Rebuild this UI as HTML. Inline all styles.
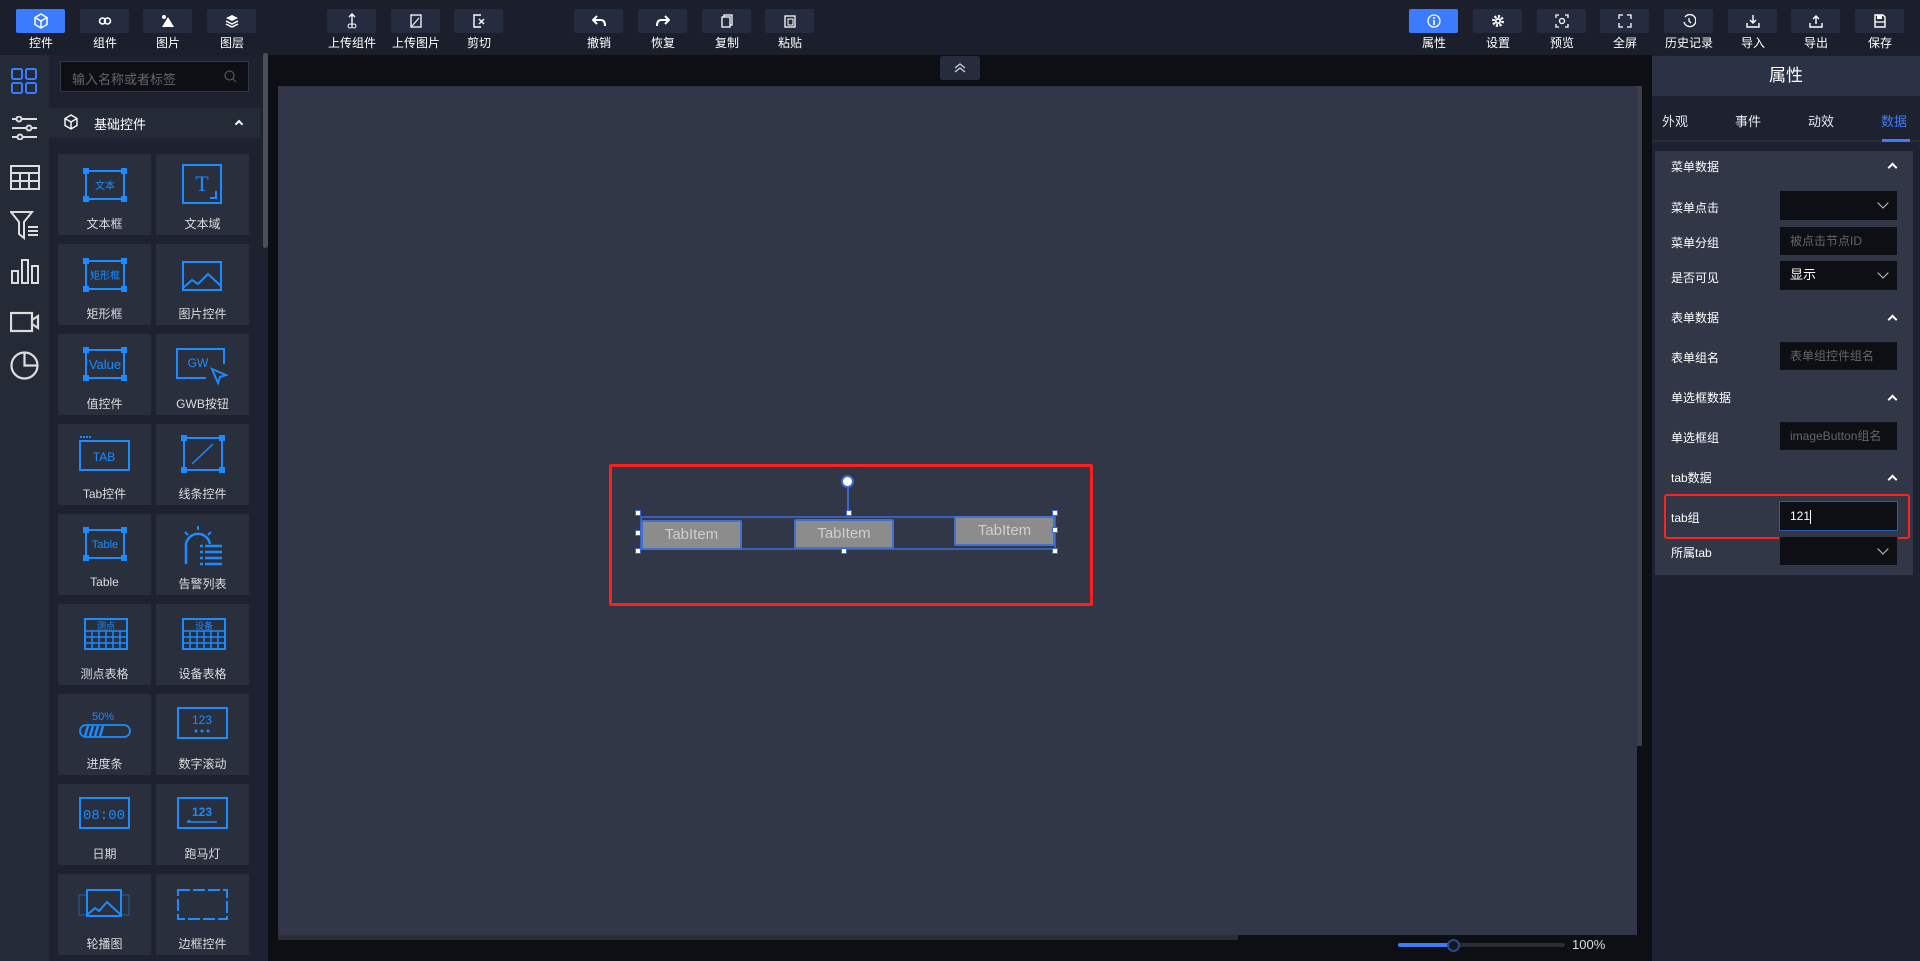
<!DOCTYPE html>
<html><head><meta charset="utf-8"><style>
*{margin:0;padding:0;box-sizing:border-box}
body{width:1920px;height:961px;overflow:hidden;background:#0d0f14;font-family:"Liberation Sans","Noto Sans CJK SC",sans-serif;color:#e6e8ee;position:relative}
.abs{position:absolute}
#top{left:0;top:0;width:1920px;height:55px;background:#1b1f2b}
.tb{position:absolute;top:9px;width:49px;height:24px;background:#252c3f;border-radius:2px;display:flex;align-items:center;justify-content:center}
.tb.on{background:#3b7cff}
.tl{position:absolute;top:34px;width:64px;margin-left:-7px;text-align:center;font-size:12px;color:#fff}
#lbar{left:0;top:55px;width:49px;height:906px;background:#252a37}
#lpanel{left:49px;top:55px;width:219px;height:906px;background:#1e2230}
.card{position:absolute;width:93px;height:81px;background:#2a2f3e}
.card .t{position:absolute;left:0;right:0;top:61px;text-align:center;font-size:12px;color:#ddd}
.card svg{position:absolute;left:24px;top:10px}
#rp{left:1652px;top:55px;width:268px;height:906px;background:#1e2230}
.lab{position:absolute;left:1671px;font-size:12px;color:#fff}
.inp{position:absolute;left:1779px;width:119px;height:30px;background:#0d0f14;border:1px solid #333845;font-size:12px;color:#666;padding-left:10px;line-height:28px}
.chev{position:absolute;right:10px;top:8px;width:8px;height:8px;border-right:1.5px solid #ccc;border-bottom:1.5px solid #ccc;transform:rotate(45deg)}
.up{position:absolute;left:1889px;width:7px;height:7px;border-left:2px solid #fff;border-top:2px solid #fff;transform:rotate(45deg)}
.ti{position:absolute;height:30px;background:#8c8c8c;border:2px solid #4070d0;border-radius:2px;color:#cfcfcf;font-size:15px;text-align:center;line-height:26px}
.h{position:absolute;width:6px;height:6px;background:#fff;border:1.5px solid #3a6ad0}
</style></head><body>
<div id="top" class="abs">
<div class="tb on" style="left:16px"><svg width="14" height="16" viewBox="0 0 14 16"><path d="M7 1L13 4.5V11.5L7 15L1 11.5V4.5Z M1 4.5L7 8L13 4.5M7 8V15" fill="none" stroke="#fff" stroke-width="1.5"/></svg></div><div class="tl" style="left:16px">控件</div>
<div class="tb" style="left:80px"><svg width="14" height="10"><circle cx="4.5" cy="5" r="3" fill="none" stroke="#fff" stroke-width="1.6"/><circle cx="9.5" cy="5" r="3" fill="none" stroke="#fff" stroke-width="1.6"/></svg></div><div class="tl" style="left:80px">组件</div>
<div class="tb" style="left:143px"><svg width="14" height="14"><circle cx="3" cy="3" r="2" fill="#fff"/><path d="M1 13L7 3L13 13Z" fill="#fff"/></svg></div><div class="tl" style="left:143px">图片</div>
<div class="tb" style="left:207px"><svg width="14" height="14"><path d="M7 1L13 4L7 7L1 4Z" fill="#fff"/><path d="M1 7L7 10L13 7M1 10L7 13L13 10" fill="none" stroke="#fff" stroke-width="1.5"/></svg></div><div class="tl" style="left:207px">图层</div>
<div class="tb" style="left:327px"><svg width="12" height="16"><path d="M6 1V11M3 4L6 1L9 4" fill="none" stroke="#fff" stroke-width="1.4"/><circle cx="4" cy="13" r="2" fill="none" stroke="#fff"/><circle cx="8" cy="13" r="2" fill="none" stroke="#fff"/></svg></div><div class="tl" style="left:327px">上传组件</div>
<div class="tb" style="left:391px"><svg width="12" height="14"><rect x="1" y="1" width="10" height="12" fill="none" stroke="#fff" stroke-width="1.3"/><path d="M2 12L9 4" stroke="#fff"/></svg></div><div class="tl" style="left:391px">上传图片</div>
<div class="tb" style="left:454px"><svg width="12" height="14"><path d="M8 1H1V13H8" fill="none" stroke="#fff" stroke-width="1.4"/><path d="M6 5L11 10M11 5L6 10" stroke="#fff" stroke-width="1.4"/></svg></div><div class="tl" style="left:454px">剪切</div>
<div class="tb" style="left:574px"><svg width="14" height="12"><path d="M5 1L1 5L5 9M1 5H9Q13 5 13 11" fill="none" stroke="#fff" stroke-width="2"/></svg></div><div class="tl" style="left:574px">撤销</div>
<div class="tb" style="left:638px"><svg width="14" height="12"><path d="M9 1L13 5L9 9M13 5H5Q1 5 1 11" fill="none" stroke="#fff" stroke-width="2"/></svg></div><div class="tl" style="left:638px">恢复</div>
<div class="tb" style="left:702px"><svg width="12" height="14"><rect x="3" y="1" width="8" height="10" fill="none" stroke="#fff" stroke-width="1.3"/><rect x="1" y="3" width="8" height="10" fill="#252c3f" stroke="#fff" stroke-width="1.3"/></svg></div><div class="tl" style="left:702px">复制</div>
<div class="tb" style="left:765px"><svg width="12" height="14"><rect x="1" y="2" width="10" height="11" fill="none" stroke="#fff" stroke-width="1.3"/><rect x="4" y="5" width="5" height="6" fill="none" stroke="#fff"/></svg></div><div class="tl" style="left:765px">粘贴</div>
<div class="tb on" style="left:1409px"><svg width="14" height="14"><circle cx="7" cy="7" r="6" fill="none" stroke="#fff" stroke-width="1.3"/><path d="M7 6V11" stroke="#fff" stroke-width="1.6"/><circle cx="7" cy="4" r="1" fill="#fff"/></svg></div><div class="tl" style="left:1409px">属性</div>
<div class="tb" style="left:1473px"><svg width="14" height="14"><circle cx="7" cy="7" r="4.5" fill="none" stroke="#fff" stroke-width="3" stroke-dasharray="2 1.5"/><circle cx="7" cy="7" r="3" fill="#fff"/><circle cx="7" cy="7" r="1.3" fill="#252c3f"/></svg></div><div class="tl" style="left:1473px">设置</div>
<div class="tb" style="left:1537px"><svg width="14" height="14"><path d="M1 4V1H4M10 1H13V4M13 10V13H10M4 13H1V10" fill="none" stroke="#fff" stroke-width="1.3"/><circle cx="7" cy="7" r="2.5" fill="none" stroke="#fff" stroke-width="1.3"/></svg></div><div class="tl" style="left:1537px">预览</div>
<div class="tb" style="left:1600px"><svg width="14" height="14"><path d="M1 5V1H5M9 1H13V5M13 9V13H9M5 13H1V9" fill="none" stroke="#fff" stroke-width="1.3"/></svg></div><div class="tl" style="left:1600px">全屏</div>
<div class="tb" style="left:1664px"><svg width="14" height="14"><path d="M3 3A6 6 0 1 1 2 8" fill="none" stroke="#fff" stroke-width="1.3"/><path d="M7 4V7L9 9" fill="none" stroke="#fff" stroke-width="1.3"/></svg></div><div class="tl" style="left:1664px">历史记录</div>
<div class="tb" style="left:1728px"><svg width="14" height="14"><path d="M7 1V9M4 6L7 9L10 6M1 9V13H13V9" fill="none" stroke="#fff" stroke-width="1.4"/></svg></div><div class="tl" style="left:1728px">导入</div>
<div class="tb" style="left:1791px"><svg width="14" height="14"><path d="M7 10V2M4 5L7 2L10 5M1 9V13H13V9" fill="none" stroke="#fff" stroke-width="1.4"/></svg></div><div class="tl" style="left:1791px">导出</div>
<div class="tb" style="left:1855px"><svg width="12" height="14"><path d="M1 1H9L11 3V13H1Z" fill="none" stroke="#fff" stroke-width="1.4"/><rect x="3" y="1" width="5" height="4" fill="#fff"/><path d="M1 8H11" stroke="#fff" stroke-width="1.3"/></svg></div><div class="tl" style="left:1855px">保存</div>
</div>

<div id="lbar" class="abs">
<svg class="abs" style="left:11px;top:13px" width="27" height="27"><g fill="none" stroke="#3b7cff" stroke-width="2"><rect x="1" y="1" width="10" height="10" rx="1.5"/><rect x="15" y="1" width="10" height="10" rx="1.5"/><rect x="1" y="15" width="10" height="10" rx="1.5"/><rect x="15" y="15" width="10" height="10" rx="1.5"/></g></svg>
<svg class="abs" style="left:11px;top:61px" width="27" height="24"><g stroke="#ddd" stroke-width="2" fill="#252a37"><path d="M1 3H26M1 12H26M1 21H26"/><circle cx="8" cy="3" r="2.5"/><circle cx="18" cy="12" r="2.5"/><circle cx="9" cy="21" r="2.5"/></g></svg>
<svg class="abs" style="left:10px;top:110px" width="30" height="25"><g fill="none" stroke="#ddd" stroke-width="2"><rect x="1" y="1" width="28" height="23"/><path d="M1 8H29M1 16H29M10 8V24M19 8V24"/></g></svg>
<svg class="abs" style="left:10px;top:155px" width="30" height="30"><g fill="none" stroke="#ddd" stroke-width="2"><path d="M1 2H22L14 12V28L9 24V12Z"/><path d="M18 17H28M18 21H28M18 25H28"/></g></svg>
<svg class="abs" style="left:11px;top:203px" width="28" height="26"><g fill="none" stroke="#ddd" stroke-width="2"><rect x="1" y="13" width="6" height="12"/><rect x="11" y="2" width="6" height="23"/><rect x="21" y="8" width="6" height="17"/></g></svg>
<svg class="abs" style="left:10px;top:256px" width="30" height="22"><g fill="none" stroke="#ddd" stroke-width="2.2"><rect x="1" y="2" width="21" height="18"/><path d="M22 9L28 5V17L22 13"/></g></svg>
<svg class="abs" style="left:10px;top:296px" width="29" height="29"><g fill="none" stroke="#ddd" stroke-width="2.2"><circle cx="14.5" cy="14.5" r="13"/><path d="M14.5 1.5V14.5H27.5"/></g></svg>
</div>

<div id="lpanel" class="abs">
<div class="abs" style="left:11px;top:6px;width:189px;height:31px;background:#0d0f14;border:1px solid #333845;font-size:13px;color:#666;padding:7px 11px">输入名称或者标签</div>
<svg class="abs" style="left:175px;top:15px" width="13" height="13"><circle cx="5.5" cy="5.5" r="4.5" fill="none" stroke="#555" stroke-width="1.2"/><path d="M9 9L12 12" stroke="#555" stroke-width="1.2"/></svg>
<div class="abs" style="left:0;top:53px;width:212px;height:30px;background:#252a37"></div>
<svg class="abs" style="left:15px;top:59px" width="14" height="16"><path d="M7 1L13 4.5V11.5L7 15L1 11.5V4.5Z M1 4.5L7 8L13 4.5M7 8V15" fill="none" stroke="#fff" stroke-width="1.4"/></svg>
<div class="abs" style="left:45px;top:59px;font-size:13px;color:#fff">基础控件</div>
<div class="abs" style="left:187px;top:66px;width:6px;height:6px;border-left:2px solid #fff;border-top:2px solid #fff;transform:rotate(45deg)"></div>
<div class="abs" style="left:214px;top:-2px;width:5px;height:195px;background:#4a4f5a;border-radius:3px"></div>
</div>

<div class="card" style="left:58px;top:154px"><svg width="46" height="40"><g stroke="#1a8cff" fill="none" stroke-width="2"><rect x="4" y="7" width="38" height="28"/></g><g fill="#1a8cff"><rect x="1" y="4" width="6" height="6"/><rect x="39" y="4" width="6" height="6"/><rect x="1" y="32" width="6" height="6"/><rect x="39" y="32" width="6" height="6"/></g><text x="23" y="25" font-size="10" fill="#1a8cff" text-anchor="middle" font-family="Noto Sans CJK SC">文本</text></svg><div class="t">文本框</div></div>
<div class="card" style="left:156px;top:154px"><svg width="46" height="42"><rect x="3" y="1" width="38" height="38" stroke="#1a8cff" stroke-width="2" fill="none"/><text x="22" y="27" font-size="22" fill="#1a8cff" text-anchor="middle" font-family="Liberation Serif">T</text><path d="M36 27V34H30" stroke="#1a8cff" stroke-width="2" fill="none"/></svg><div class="t">文本域</div></div>
<div class="card" style="left:58px;top:244px"><svg width="46" height="40"><rect x="4" y="7" width="38" height="28" stroke="#1a8cff" stroke-width="2" fill="none"/><g fill="#1a8cff"><rect x="1" y="4" width="6" height="6"/><rect x="39" y="4" width="6" height="6"/><rect x="1" y="32" width="6" height="6"/><rect x="39" y="32" width="6" height="6"/></g><text x="23" y="25" font-size="10" fill="#1a8cff" text-anchor="middle" font-family="Noto Sans CJK SC">矩形框</text></svg><div class="t">矩形框</div></div>
<div class="card" style="left:156px;top:244px"><svg width="46" height="40"><rect x="3" y="8" width="38" height="28" stroke="#1a8cff" stroke-width="2" fill="none"/><path d="M3 34L12 26L18 30L28 20L41 32" stroke="#1a8cff" stroke-width="2" fill="none"/></svg><div class="t">图片控件</div></div>
<div class="card" style="left:58px;top:334px"><svg width="46" height="40"><rect x="4" y="6" width="38" height="28" stroke="#1a8cff" stroke-width="2" fill="none"/><g fill="#1a8cff"><rect x="1" y="3" width="6" height="6"/><rect x="39" y="3" width="6" height="6"/><rect x="1" y="31" width="6" height="6"/><rect x="39" y="31" width="6" height="6"/></g><text x="23" y="25" font-size="13" fill="#1a8cff" text-anchor="middle">Value</text></svg><div class="t">值控件</div></div>
<div class="card" style="left:156px;top:334px"><svg width="56" height="42" style="left:18px"><path d="M50 20V5H3V34H32" stroke="#1a8cff" stroke-width="2" fill="none"/><text x="24" y="23" font-size="12" fill="#1a8cff" text-anchor="middle">GW</text><path d="M38 25L52 31L46 33L44 39Z" stroke="#1a8cff" stroke-width="2" fill="none"/></svg><div class="t">GWB按钮</div></div>
<div class="card" style="left:58px;top:424px"><svg width="56" height="40" style="left:19px"><rect x="3" y="7" width="49" height="29" stroke="#1a8cff" stroke-width="2" fill="none"/><path d="M3 3H15" stroke="#1a8cff" stroke-width="2" stroke-dasharray="2 1"/><text x="27" y="27" font-size="12" fill="#1a8cff" text-anchor="middle">TAB</text></svg><div class="t">Tab控件</div></div>
<div class="card" style="left:156px;top:424px"><svg width="46" height="42"><rect x="4" y="4" width="38" height="32" stroke="#1a8cff" stroke-width="2" fill="none"/><g fill="#1a8cff"><rect x="1" y="1" width="6" height="6"/><rect x="39" y="1" width="6" height="6"/><rect x="1" y="33" width="6" height="6"/><rect x="39" y="33" width="6" height="6"/></g><path d="M12 30L33 10" stroke="#1a8cff" stroke-width="1.5"/></svg><div class="t">线条控件</div></div>
<div class="card" style="left:58px;top:514px"><svg width="46" height="40"><rect x="4" y="6" width="38" height="28" stroke="#1a8cff" stroke-width="2" fill="none"/><g fill="#1a8cff"><rect x="1" y="3" width="6" height="6"/><rect x="39" y="3" width="6" height="6"/><rect x="1" y="31" width="6" height="6"/><rect x="39" y="31" width="6" height="6"/></g><text x="23" y="24" font-size="11" fill="#1a8cff" text-anchor="middle">Table</text></svg><div class="t">Table</div></div>
<div class="card" style="left:156px;top:514px"><svg width="46" height="42"><path d="M6 40V24A12 12 0 0 1 30 20" stroke="#1a8cff" stroke-width="2.5" fill="none"/><path d="M18 2V6M5 8L8 11M31 8L28 11" stroke="#1a8cff" stroke-width="2"/><path d="M20 22H42M20 28H42M20 34H42M20 40H42" stroke="#1a8cff" stroke-width="2.5" stroke-dasharray="3 2 30"/></svg><div class="t">告警列表</div></div>
<div class="card" style="left:58px;top:604px"><svg width="46" height="40"><rect x="3" y="5" width="42" height="30" stroke="#1a8cff" stroke-width="2" fill="none"/><path d="M3 17H45M3 23H45M3 29H45M10 17V35M17 17V35M24 17V35M31 17V35M38 17V35" stroke="#1a8cff" stroke-width="1.5"/><text x="24" y="15" font-size="9" fill="#1a8cff" text-anchor="middle" font-family="Noto Sans CJK SC">测点</text></svg><div class="t">测点表格</div></div>
<div class="card" style="left:156px;top:604px"><svg width="46" height="40"><rect x="3" y="5" width="42" height="30" stroke="#1a8cff" stroke-width="2" fill="none"/><path d="M3 17H45M3 23H45M3 29H45M10 17V35M17 17V35M24 17V35M31 17V35M38 17V35" stroke="#1a8cff" stroke-width="1.5"/><text x="24" y="15" font-size="9" fill="#1a8cff" text-anchor="middle" font-family="Noto Sans CJK SC">设备</text></svg><div class="t">设备表格</div></div>
<div class="card" style="left:58px;top:694px"><svg width="56" height="40" style="left:19px"><text x="26" y="16" font-size="11" fill="#1a8cff" text-anchor="middle">50%</text><rect x="3" y="21" width="50" height="12" rx="6" stroke="#1a8cff" stroke-width="1.8" fill="none"/><path d="M8 32L11 22M13 32L16 22M18 32L21 22M23 32L26 22" stroke="#1a8cff" stroke-width="2.5"/></svg><div class="t">进度条</div></div>
<div class="card" style="left:156px;top:694px"><svg width="56" height="40" style="left:19px"><rect x="3" y="4" width="49" height="30" stroke="#1a8cff" stroke-width="2" fill="none"/><text x="27" y="20" font-size="12" fill="#1a8cff" text-anchor="middle">123</text><circle cx="21" cy="27" r="1.5" fill="#1a8cff"/><circle cx="27" cy="27" r="1.5" fill="#1a8cff"/><circle cx="33" cy="27" r="1.5" fill="#1a8cff"/></svg><div class="t">数字滚动</div></div>
<div class="card" style="left:58px;top:784px"><svg width="56" height="40" style="left:19px"><rect x="3" y="4" width="49" height="30" stroke="#1a8cff" stroke-width="2" fill="none"/><text x="27" y="25" font-size="14" fill="#1a8cff" text-anchor="middle" font-family="Liberation Mono">08:00</text></svg><div class="t">日期</div></div>
<div class="card" style="left:156px;top:784px"><svg width="56" height="40" style="left:19px"><rect x="3" y="4" width="49" height="30" stroke="#1a8cff" stroke-width="2" fill="none"/><text x="27" y="22" font-size="12" fill="#1a8cff" text-anchor="middle" font-weight="bold">123</text><path d="M12 28H42M12 28L15 26" stroke="#1a8cff" stroke-width="1.5"/></svg><div class="t">跑马灯</div></div>
<div class="card" style="left:58px;top:874px"><svg width="56" height="40" style="left:19px"><rect x="2" y="11" width="50" height="20" stroke="#1a8cff" stroke-width="1.3" fill="none" opacity=".4"/><rect x="10" y="6" width="34" height="26" stroke="#1a8cff" stroke-width="2" fill="#2a2f3e"/><path d="M10 31L18 24L22 27L30 18L44 31" stroke="#1a8cff" stroke-width="2" fill="none"/></svg><div class="t">轮播图</div></div>
<div class="card" style="left:156px;top:874px"><svg width="56" height="40" style="left:19px"><rect x="3" y="6" width="49" height="29" stroke="#1a8cff" stroke-width="2" fill="none" stroke-dasharray="12 3"/></svg><div class="t">边框控件</div></div>

<!-- canvas -->
<div class="abs" style="left:940px;top:56px;width:40px;height:24px;background:#262c3c;border-radius:3px"></div>
<svg class="abs" style="left:953px;top:62px" width="14" height="12"><path d="M2 6L7 2L12 6M2 10L7 6L12 10" fill="none" stroke="#ccc" stroke-width="1.4"/></svg>
<div class="abs" style="left:278px;top:86px;width:1359px;height:849px;background:#323747"></div>
<div class="abs" style="left:1637px;top:86px;width:5px;height:660px;background:#3a3f4b"></div>
<div class="abs" style="left:278px;top:935px;width:960px;height:5px;background:#2a2d35"></div>
<div class="abs" style="left:609px;top:464px;width:484px;height:142px;border:3px solid #ff1f1f;border-radius:2px"></div>
<div class="abs" style="left:640px;top:516px;width:416px;height:34px;border:2px solid #3a5fb8"></div>
<div class="abs" style="left:847px;top:482px;width:2px;height:34px;background:#3a6ad0"></div>
<div class="abs" style="left:841px;top:475px;width:13px;height:13px;border-radius:50%;background:#fff;border:2px solid #3a6ad0"></div>
<div class="ti" style="left:641px;top:520px;width:101px">TabItem</div>
<div class="ti" style="left:794px;top:519px;width:100px">TabItem</div>
<div class="ti" style="left:954px;top:516px;width:101px">TabItem</div>
<div class="h" style="left:635px;top:510px"></div><div class="h" style="left:846px;top:510px"></div><div class="h" style="left:1052px;top:510px"></div>
<div class="h" style="left:635px;top:530px"></div><div class="h" style="left:1052px;top:527px"></div>
<div class="h" style="left:635px;top:548px"></div><div class="h" style="left:841px;top:548px"></div><div class="h" style="left:1052px;top:548px"></div>
<div class="abs" style="left:1398px;top:943px;width:167px;height:4px;background:#2a2d35;border-radius:2px"></div>
<div class="abs" style="left:1398px;top:943px;width:55px;height:4px;background:#3b7cff;border-radius:2px"></div>
<div class="abs" style="left:1447px;top:939px;width:13px;height:13px;border-radius:50%;background:#15171d;border:2px solid #2b4a8a"></div>
<div class="abs" style="left:1572px;top:937px;font-size:13px;color:#ddd">100%</div>

<!-- right panel -->
<div id="rp" class="abs"></div>
<div class="abs" style="left:1652px;top:56px;width:268px;height:40px;background:#2b3245;text-align:center;font-size:17px;color:#fff;line-height:40px">属性</div>
<div class="abs" style="left:1662px;top:111px;font-size:13px">外观</div>
<div class="abs" style="left:1735px;top:111px;font-size:13px">事件</div>
<div class="abs" style="left:1808px;top:111px;font-size:13px">动效</div>
<div class="abs" style="left:1881px;top:111px;font-size:13px;color:#3b7cff">数据</div>
<div class="abs" style="left:1652px;top:140px;width:268px;height:2px;background:#2a2c33"></div>
<div class="abs" style="left:1882px;top:139px;width:28px;height:3px;background:#3b7cff"></div>
<div class="abs" style="left:1655px;top:151px;width:258px;height:424px;background:#323747"></div>
<div class="lab" style="top:158px">菜单数据</div><div class="up" style="top:164px"></div>
<div class="lab" style="top:199px">菜单点击</div><div class="inp" style="top:190px;height:31px"><div class="chev"></div></div>
<div class="lab" style="top:234px">菜单分组</div><div class="inp" style="top:226px;height:30px">被点击节点ID</div>
<div class="lab" style="top:269px">是否可见</div><div class="inp" style="top:260px;height:31px;color:#fff;font-size:13px">显示<div class="chev"></div></div>
<div class="lab" style="top:309px">表单数据</div><div class="up" style="top:316px"></div>
<div class="lab" style="top:349px">表单组名</div><div class="inp" style="top:341px">表单组控件组名</div>
<div class="lab" style="top:389px">单选框数据</div><div class="up" style="top:396px"></div>
<div class="lab" style="top:429px">单选框组</div><div class="inp" style="top:421px">imageButton组名</div>
<div class="lab" style="top:469px">tab数据</div><div class="up" style="top:476px"></div>
<div class="lab" style="top:509px">tab组</div><div class="inp" style="top:501px;color:#fff;border-color:#2860b0">121<span style="display:inline-block;width:1px;height:14px;background:#fff;vertical-align:middle"></span></div>
<div class="abs" style="left:1664px;top:494px;width:246px;height:45px;border:2px solid #ff2020;border-radius:3px"></div>
<div class="lab" style="top:544px">所属tab</div><div class="inp" style="top:536px"><div class="chev"></div></div>
</body></html>
